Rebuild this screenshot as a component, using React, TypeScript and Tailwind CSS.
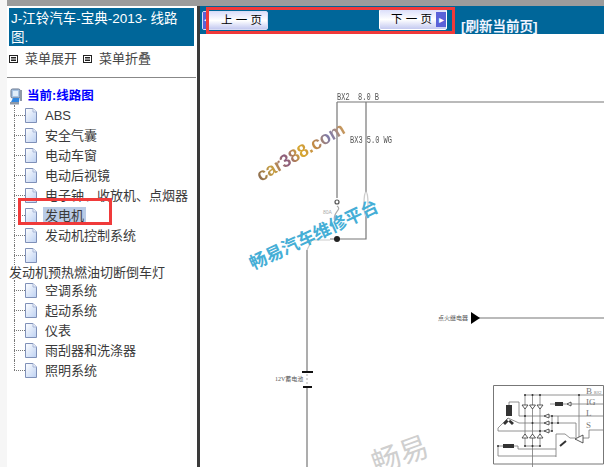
import type { ReactNode } from 'react';

const CJK = "font-['Liberation_Sans','Noto_Sans_CJK_SC',sans-serif]";

const topItems = ['ABS', '安全气囊', '电动车窗', '电动后视镜', '电子钟、收放机、点烟器', '发电机', '发动机控制系统', ''];
const bottomItems = ['空调系统', '起动系统', '仪表', '雨刮器和洗涤器', '照明系统'];

function PageIcon() {
  return (
    <svg width="12" height="15" viewBox="0 0 12 15" className="shrink-0">
      <defs>
        <linearGradient id="pg" x1="0" y1="0" x2="1" y2="1">
          <stop offset="0" stopColor="#ffffff" />
          <stop offset="1" stopColor="#bcd0f2" />
        </linearGradient>
      </defs>
      <path d="M.5 .5H8L11.5 4V14.5H.5Z" fill="url(#pg)" stroke="#7f90b8" />
      <path d="M8 .5V4H11.5" fill="#e8eefa" stroke="#a9b7d6" />
    </svg>
  );
}

function ComputerIcon() {
  return (
    <svg width="12" height="17" viewBox="0 0 12 17" className="shrink-0">
      <rect x="1" y="1" width="9" height="9" rx="1.5" fill="#a8c4e4" stroke="#66758c" />
      <rect x="3" y="3" width="5" height="5" fill="#e2eefa" />
      <path d="M3 10L1 14H9L9.5 10Z" fill="#2f86e0" />
      <rect x="0" y="14" width="9" height="2.5" fill="#8d98a8" />
      <rect x="10" y="2" width="2" height="11" fill="#8f98a6" />
    </svg>
  );
}

function MenuIcon() {
  return (
    <svg width="9" height="8" viewBox="0 0 9 8" className="shrink-0" fill="none" stroke="#222">
      <rect x=".5" y=".5" width="8" height="7" />
      <path d="M2 2.5H7M2 4H7M2 5.5H7" />
    </svg>
  );
}

function TreeRow({ label, last, selected }: { label: string; last?: boolean; selected?: boolean }) {
  return (
    <div className="relative flex h-5 items-center pl-[25px]">
      <span className={`absolute left-[14px] top-0 w-px border-l border-dotted border-[#777] ${last ? 'h-2.5' : 'h-5'}`} />
      <span className="absolute left-[14px] top-2.5 w-[11px] border-t border-dotted border-[#777]" />
      <PageIcon />
      <span className={`ml-[6px] px-[2px] text-[13px] leading-[17px] text-[#3a3a3a] whitespace-nowrap ${selected ? 'bg-[#b9cbe6]' : ''}`}>{label}</span>
    </div>
  );
}

function PageButton({ children, className }: { children: ReactNode; className: string }) {
  return (
    <div className={`flex items-center rounded-[2px] border border-[#d8dcf4] bg-gradient-to-b from-[#dcdffa] via-white to-[#c4c9f0] text-[11.5px] text-black ${className}`}>
      {children}
    </div>
  );
}

function Diagram() {
  return (
    <svg width="404" height="467" viewBox="200 0 404 467" className="block blur-[0.5px]" fill="none" stroke="#777" strokeWidth="1.2">
      <path d="M337 102H604M337 102V198M366 102V192M366 216V239H330M307 250V371M307 388V467" />
      <path d="M337 206C343 210 331 212 335 222" stroke="#aaa" />
      <circle cx="337" cy="202" r="2" stroke="#555" />
      <ellipse cx="366" cy="204" rx="2" ry="12" stroke="#ccc" />
      <path d="M307 250L312 240H330" stroke="#ccc" />
      <circle cx="337" cy="239" r="3" fill="#222" stroke="none" />
      <path d="M478 318H604" />
      <path d="M471 312V324L480 318Z" fill="#000" stroke="none" />
      <path d="M302 372H313M303 387H312" stroke="#111" strokeWidth="2" />
      <path d="M307 374V386" stroke="#bbb" strokeDasharray="2 2" />
      <g strokeWidth="0.8">
        <path d="M493.5 385.5H603.5V464H493.5Z" strokeWidth="1" />
        <path d="M525 395H604M525 395V446M532.5 395V467M540 395V446M525 446H540M579 395V437" />
        <path d="M550 404H604M546 416H604M546 423H576V440M498 431H552M552 416V431M558 416V423" />
        <path d="M509 405V402H519V416H525M508 418L498 428V431M508 418L519 423H546M525 416H546" />
        <path d="M498 446H518V449H556M498 446V456H556M556 457V434H565L570 438H575" />
        <path d="M583 438H589V430H604" />
        <path d="M560 446L566 441" strokeWidth="2" stroke="#333" />
      </g>
      <g fill="#333" stroke="none">
        <rect x="506" y="405" width="6" height="11" />
        <rect x="503" y="444" width="11" height="4" />
        <rect x="555" y="402" width="8" height="4" />
        <path d="M508 418l-5 5 2 2 5-5ZM508 418l6 5-2 2-5-5Z" />
        <circle cx="525" cy="395" r="1" />
        <circle cx="532.5" cy="395" r="1" />
        <circle cx="540" cy="395" r="1" />
        <circle cx="579" cy="395" r="1" />
        <circle cx="525" cy="416" r="1" />
        <circle cx="532.5" cy="423" r="1" />
        <circle cx="540" cy="431" r="1" />
        <circle cx="552" cy="416" r="1" />
        <circle cx="552" cy="423" r="1" />
        <circle cx="552" cy="431" r="1" />
        <circle cx="558" cy="423" r="1" />
        <circle cx="525" cy="446" r="1" />
        <circle cx="532.5" cy="446" r="1" />
        <circle cx="540" cy="446" r="1" />
        <circle cx="498" cy="446" r="1" />
      </g>
      <g stroke="#333" strokeWidth="0.8" fill="#fff">
        <path d="M522 405H528L525 409ZM529.5 405H535.5L532.5 409ZM537 405H543L540 409Z" />
        <path d="M522 438H528L525 434ZM529.5 438H535.5L532.5 434ZM537 438H543L540 434Z" />
        <path d="M544 416L549 414V418ZM544 423L549 421V425ZM544 431L549 429V433Z" />
        <path d="M567 404L571 402V406Z" />
        <path d="M575 439L583 435V443Z" />
      </g>
    </svg>
  );
}

export default function App() {
  return (
    <div className={`relative flex h-[467px] w-[604px] overflow-hidden bg-white ${CJK}`}>
      <aside className="flex h-full w-[197px] shrink-0 flex-col bg-white">
        <div className="h-[6px] bg-[#9c9c9c]" />
        <div className="flex flex-1 flex-col pl-[9px] pr-[3px] pt-[2px]">
          <h1 className="h-[38px] bg-[#006699] px-[2px] pt-[1px] text-[13.5px] leading-[19px] text-white">J-江铃汽车-宝典-2013- 线路图.</h1>
          <div className="mt-[4px] flex h-[17px] items-center text-[13px] text-[#444]">
            <MenuIcon />
            <span className="ml-[7px]">菜单展开</span>
            <span className="ml-[6px] flex"><MenuIcon /></span>
            <span className="ml-[7px]">菜单折叠</span>
          </div>
        </div>
      </aside>
      <div className="absolute left-0 top-0 h-full w-[7px] bg-[#f6f6f6]" />
      <nav className="absolute left-0 top-[77px] w-[196px]">
        <div className="ml-[7px] border-t border-[#888]" />
        <div className="box-content flex h-[18px] items-center pl-[10px] pt-[9px] text-[12.5px] font-bold text-[#0000ff]">
          <ComputerIcon />
          <span className="ml-[5px]">当前:线路图</span>
        </div>
        <div>
          {topItems.map((label) => (
            <TreeRow key={label || 'blank'} label={label} selected={label === '发电机'} />
          ))}
          <div className="h-[15px] pl-[9px] text-[13px] leading-[15px] whitespace-nowrap text-[#3a3a3a]">发动机预热燃油切断倒车灯</div>
          {bottomItems.map((label, i) => (
            <TreeRow key={label} label={label} last={i === bottomItems.length - 1} />
          ))}
        </div>
      </nav>

      <div className="flex h-full w-[3px] shrink-0 flex-col bg-[#3a3a3a]">
        <div className="h-[6px] bg-[#9c9c9c]" />
      </div>

      <main className="flex min-w-0 flex-1 flex-col">
        <div className="h-[6px] bg-[#9c9c9c]" />
        <header className="flex h-[28px] items-start bg-[#006699] pl-[2px]">
          <PageButton className="mt-[5px] h-[19px] w-[66px]">
            <span className="flex h-full w-[6px] items-center justify-center bg-[#5a62d8] text-[7px] text-white">◂</span>
            <span className="ml-[12px] whitespace-pre">上 一 页</span>
          </PageButton>
          <PageButton className="ml-[111px] mt-[3px] h-[21px] w-[68px] border-white">
            <span className="ml-[11px] whitespace-pre">下 一 页</span>
            <span className="ml-auto flex h-[15px] w-[10px] items-center justify-center bg-[#5a62d8] text-[10px] text-white">▸</span>
          </PageButton>
          <span className="ml-[14px] mt-[12px] text-[13.5px] leading-[17px] font-bold text-[#f0f4ff]">[刷新当前页]</span>
        </header>
        <div className="relative flex-1 overflow-hidden">
          <div className="absolute left-0 top-[-34px]">
            <Diagram />
          </div>
        </div>
      </main>

      {/* schematic labels and watermarks */}
      <span className="absolute left-[337px] top-[93px] origin-left scale-y-150 font-['Liberation_Mono',monospace] text-[7px] leading-[8px] text-[#555]">BX2</span>
      <span className="absolute left-[358px] top-[93px] origin-left scale-y-150 font-['Liberation_Mono',monospace] text-[7px] leading-[8px] whitespace-pre text-[#555]">8.0 B</span>
      <span className="absolute left-[350px] top-[136px] origin-left scale-y-150 font-['Liberation_Mono',monospace] text-[7px] leading-[8px] whitespace-pre text-[#555]">BX3 5.0 WG</span>
      <span className="absolute left-[323px] top-[209px] text-[5px] leading-[6px] text-[#aaa]">80A</span>
      <span className="absolute left-[438px] top-[314px] font-['Liberation_Serif','Noto_Sans_CJK_SC',serif] text-[6px] leading-[8px] whitespace-nowrap text-[#555]">点火继电器</span>
      <span className="absolute left-[275px] top-[375px] font-['Liberation_Serif','Noto_Sans_CJK_SC',serif] text-[6px] leading-[8px] whitespace-nowrap text-[#555]">12V蓄电池</span>
      <span className="absolute left-[586px] top-[386px] font-['Liberation_Serif',serif] text-[9px] leading-[10px] text-[#777]">B</span>
      <span className="absolute left-[594px] top-[390px] text-[4px] leading-[5px] text-[#888]">BX2</span>
      <span className="absolute left-[586px] top-[397px] font-['Liberation_Serif',serif] text-[9px] leading-[10px] text-[#777]">IG</span>
      <span className="absolute left-[586px] top-[408px] font-['Liberation_Serif',serif] text-[9px] leading-[10px] text-[#777]">L</span>
      <span className="absolute left-[586px] top-[420px] font-['Liberation_Serif',serif] text-[9px] leading-[10px] text-[#777]">S</span>
      <span className="absolute left-[251px] top-[139px] -rotate-[30deg] bg-[linear-gradient(90deg,#8a6a50,#c8a040,#8a5a80,#d8a830,#c08848,#7a7ab0,#d09a50)] bg-clip-text text-[18px] leading-[26px] font-bold text-transparent">car388.com</span>
      <span className="absolute left-[244px] top-[223px] -rotate-[25deg] text-[17.5px] leading-[24px] font-bold whitespace-nowrap text-[#45aed6]">畅易汽车维修平台</span>
      <span className="absolute left-[371px] top-[434px] -rotate-[20deg] text-[29px] leading-[42px] text-[#cfcfcf]">畅易</span>

      {/* red annotation boxes */}
      <div className="pointer-events-none absolute left-[206px] top-[7px] h-[27px] w-[249px] border-[3px] border-[#f03a3a]" />
      <div className="pointer-events-none absolute left-[18px] top-[198px] h-[27px] w-[94px] border-[3px] border-[#f03a3a]" />
    </div>
  );
}
